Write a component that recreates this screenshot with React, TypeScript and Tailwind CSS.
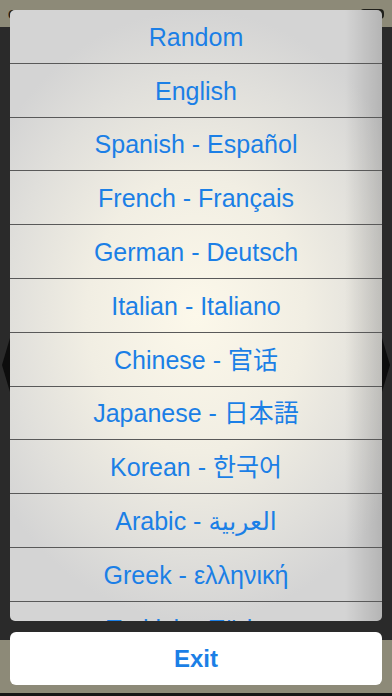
const languages = [
  { label: "Random" },
  { label: "English" },
  { label: "Spanish - Español" },
  { label: "French - Français" },
  { label: "German - Deutsch" },
  { label: "Italian - Italiano" },
  { label: "Chinese - 官话", cjk: "sc" },
  { label: "Japanese - 日本語", cjk: "jp" },
  { label: "Korean - 한국어", cjk: "kr" },
  { label: "Arabic - العربية" },
  { label: "Greek - ελληνική" },
  { label: "Turkish - Türkçe" },
];

function rowFont(cjk?: string) {
  if (cjk === "sc") return "font-['Liberation_Sans','Noto_Sans_CJK_SC',sans-serif]";
  if (cjk === "jp") return "font-['Liberation_Sans','Noto_Sans_CJK_JP',sans-serif]";
  if (cjk === "kr") return "font-['Liberation_Sans','Noto_Sans_CJK_KR',sans-serif]";
  return "font-['Liberation_Sans','DejaVu_Sans',sans-serif]";
}

export default function App() {
  return (
    <div className="relative w-[392px] h-[696px] overflow-hidden font-['Liberation_Sans',sans-serif]">
      {/* background app, dimmed */}
      <div className="flex flex-col h-full">
        <div className="h-[27px] bg-[#8d8a78] flex items-start justify-between px-2 pt-[6px] text-[12px] font-bold text-[#1f1f1a]">
          <span>Carrier ◌</span>
          <span>8:13 PM</span>
          <span className="w-[24px] h-[10px] bg-[#1f1f1a] rounded-sm mt-[3px]" />
        </div>
        <div className="flex-1 bg-[#2a2a2a] relative">
          <svg className="absolute left-0 top-[303px]" width="10" height="70" viewBox="0 0 10 70">
            <polygon points="10,8 2,35 10,62" fill="#0d0d0d" />
          </svg>
          <svg className="absolute right-0 top-[303px]" width="10" height="70" viewBox="0 0 10 70">
            <polygon points="0,8 8,35 0,62" fill="#0d0d0d" />
          </svg>
        </div>
        <div className="h-[53px] bg-[#8d8a78]" />
        <div className="h-[3px] bg-[#161616]" />
      </div>

      {/* action sheet */}
      <div className="absolute left-[10px] top-[10px] w-[372px] h-[611px] rounded-[5px] overflow-hidden bg-[radial-gradient(ellipse_65%_50%_at_50%_50%,#fcf8ea_0%,#f1eee3_45%,#e0dfdb_78%,#d4d4d4_100%)]">
        <div className="absolute inset-0 bg-gradient-to-r from-transparent via-transparent via-90% to-black/15" />
        <div className="relative flex flex-col">
          {languages.map((l) => (
            <div
              key={l.label}
              className="h-[53.8px] shrink-0 flex items-center justify-center border-b border-[#595959]"
            >
              <span className={`text-[25px] leading-none pt-[2px] text-[#1b7fe6] ${rowFont(l.cjk)}`}>{l.label}</span>
            </div>
          ))}
        </div>
      </div>

      {/* cancel button */}
      <div className="absolute left-[10px] top-[632px] w-[372px] h-[53px] rounded-[6px] bg-white flex items-center justify-center">
        <span className="text-[24px] leading-none pt-[1px] font-bold text-[#1b7fe6]">Exit</span>
      </div>
    </div>
  );
}
